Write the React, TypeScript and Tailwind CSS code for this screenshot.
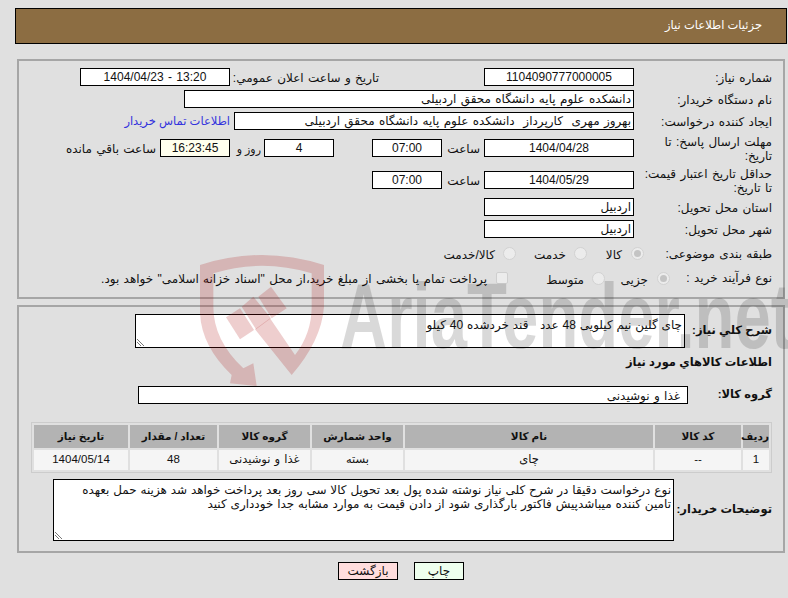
import React from "react";

const Box = ({ w, children, center, bg, ltr }: { w: string; children?: React.ReactNode; center?: boolean; bg?: string; ltr?: boolean }) => (
  <div dir={ltr ? "ltr" : undefined} className={`${w} h-[18px] shrink-0 border border-black ${bg ?? "bg-white"} leading-[16px] px-[2px] whitespace-pre overflow-hidden ${center ? "text-center" : "text-right"}`}>{children}</div>
);

const Row = ({ label, h = "h-[18px]", mt = "mt-[4px]", children }: { label: React.ReactNode; h?: string; mt?: string; children?: React.ReactNode }) => (
  <div className={`flex items-center ${h} ${mt}`}>
    <div className="w-[138px] shrink-0 leading-[14px] pt-[2px]">{label}</div>
    {children}
  </div>
);

const Radio = ({ on }: { on?: boolean }) => (
  <span className="w-[13px] h-[13px] shrink-0 rounded-full border border-[#d2d2d2] bg-[#ececec] flex items-center justify-center">
    {on && <span className="w-[7px] h-[7px] rounded-full bg-[#c4c4c4]" />}
  </span>
);

const Grip = () => (
  <svg className="absolute left-0 bottom-0 w-[9px] h-[9px]" viewBox="0 0 9 9" fill="none" stroke="#777" strokeWidth="1">
    <path d="M1 1 8 8M1 4 5 8" />
  </svg>
);

const Th = ({ children }: { children: React.ReactNode }) => (
  <th className="h-[23px] p-0 bg-[#b3b3b3] text-center font-bold text-[10.5px] whitespace-nowrap [word-spacing:0]">{children}</th>
);
const Td = ({ children }: { children: React.ReactNode }) => (
  <td className="h-[20px] p-0 bg-[#f5f5f5] text-center text-[11.5px] whitespace-nowrap">{children}</td>
);

export default function App() {
  return (
    <div dir="rtl" className='relative w-[788px] h-[598px] overflow-hidden bg-[#e0e0e0] text-[#111] text-[12px] [word-spacing:1px] font-["Liberation_Sans","DejaVu_Sans",sans-serif]'>
      <div className="pt-[8px] ps-[1px] pe-[15px]">
        <div className="h-[36px] border border-black bg-[#8c6d42] text-white text-[11.5px] [word-spacing:0] flex items-center pr-[24px]">جزئیات اطلاعات نیاز</div>
      </div>

      <div className="mt-[15px] ms-[3px] me-[17px] h-[240px] border-2 border-[#a6a6a6] pt-[7px] pr-[11px]">
        <Row label="شماره نیاز:" mt="mt-0">
          <Box w="w-[150px]" center>1104090777000005</Box>
          <div className="w-[254px] shrink-0 ps-[105px] pt-[2px] whitespace-nowrap">تاریخ و ساعت اعلان عمومي:</div>
          <Box w="w-[150px]" center ltr>1404/04/23 - 13:20</Box>
        </Row>
        <Row label="نام دستگاه خریدار:">
          <Box w="w-[450px]">دانشکده علوم پایه دانشگاه محقق اردبیلی</Box>
        </Row>
        <Row label="ایجاد کننده درخواست:">
          <Box w="w-[400px]">بهروز مهری  کارپرداز  دانشکده علوم پایه دانشگاه محقق اردبیلی</Box>
          <div className="ps-[4px] pt-[2px] text-[#3333dd] [word-spacing:0] text-[11.5px]">اطلاعات تماس خریدار</div>
        </Row>
        <Row label={<>مهلت ارسال پاسخ: تا<br />تاریخ:</>} h="h-[28px]">
          <Box w="w-[150px]" center>1404/04/28</Box>
          <div className="w-[42px] shrink-0 ps-[4px] pt-[2px]">ساعت</div>
          <Box w="w-[70px]" center>07:00</Box>
          <div className="w-[38px] shrink-0" />
          <Box w="w-[70px]" center>4</Box>
          <div className="w-[34px] shrink-0 ps-[3px] pt-[2px] [word-spacing:0] text-[11px]">روز و</div>
          <Box w="w-[70px]" center bg="bg-[#ffffee]">16:23:45</Box>
          <div className="ps-[4px] pt-[2px]">ساعت باقي مانده</div>
        </Row>
        <Row label={<>حداقل تاریخ اعتبار قیمت:<br />تا تاریخ:</>} h="h-[28px]">
          <Box w="w-[150px]" center>1404/05/29</Box>
          <div className="w-[42px] shrink-0 ps-[4px] pt-[2px]">ساعت</div>
          <Box w="w-[70px]" center>07:00</Box>
        </Row>
        <Row label="استان محل تحویل:">
          <Box w="w-[150px]">اردبیل</Box>
        </Row>
        <Row label="شهر محل تحویل:">
          <Box w="w-[150px]">اردبیل</Box>
        </Row>
        <div className="flex items-center h-[18px] mt-[6px]">
          <div className="w-[128px] shrink-0 pt-[2px]">طبقه بندی موضوعی:</div>
          <Radio on />
          <span className="w-[44px] shrink-0 ps-[9px] pt-[3px]">کالا</span>
          <Radio />
          <span className="w-[58px] shrink-0 ps-[8px] pt-[3px]">خدمت</span>
          <Radio />
          <span className="ps-[8px] pt-[3px]">کالا/خدمت</span>
        </div>
        <div className="flex items-center h-[18px] mt-[7px]">
          <div className="w-[102px] shrink-0">نوع فرآیند خرید :</div>
          <Radio on />
          <span className="w-[52px] shrink-0 ps-[9px] pt-[3px]">جزیی</span>
          <Radio />
          <span className="w-[84px] shrink-0 ps-[8px] pt-[3px]">متوسط</span>
          <span className="w-[12px] h-[12px] shrink-0 rounded-[2px] border border-[#cfcfcf] bg-[#ececec]" />
          <span className="ps-[9px] pt-[2px] whitespace-nowrap">پرداخت تمام یا بخشی از مبلغ خرید،از محل "اسناد خزانه اسلامی" خواهد بود.</span>
        </div>
      </div>

      <div className="mt-[6px] ms-[3px] me-[17px] h-[248px] border-2 border-[#a6a6a6] pt-[7px] pr-[11px]">
        <div className="flex items-center h-[34px]">
          <div className="w-[87px] shrink-0 font-bold text-[11.5px] [word-spacing:0] whitespace-nowrap">شرح کلي نیاز:</div>
          <div className="relative w-[550px] h-[34px] shrink-0 border border-black bg-white pr-[2px] leading-[20px] whitespace-pre [word-spacing:0.5px]">چای گلین نیم کیلویی 48 عدد   قند خردشده 40 کیلو<Grip /></div>
        </div>
        <div className="h-[14px] mt-[7px] leading-[14px] font-bold text-[11.5px] [word-spacing:0]">اطلاعات کالاهاي مورد نیاز</div>
        <div className="flex items-center h-[18px] mt-[17px]">
          <div className="w-[84px] shrink-0 font-bold text-[11.5px] [word-spacing:0]">گروه کالا:</div>
          <div className="w-[550px] h-[18px] shrink-0 border border-black bg-white pr-[7px] leading-[18px]">غذا و نوشیدنی</div>
        </div>
        <div className="mt-[18px]">
          <table className="table-fixed w-[741px] border border-[#cccccc] border-separate border-spacing-[2px]">
            <colgroup>
              <col className="w-[26px]" />
              <col className="w-[86px]" />
              <col className="w-[248px]" />
              <col className="w-[91px]" />
              <col className="w-[91px]" />
              <col className="w-[87px]" />
              <col className="w-[94px]" />
            </colgroup>
            <thead>
              <tr>
                <Th>ردیف</Th>
                <Th>کد کالا</Th>
                <Th>نام کالا</Th>
                <Th>واحد شمارش</Th>
                <Th>گروه کالا</Th>
                <Th>تعداد / مقدار</Th>
                <Th>تاریخ نیاز</Th>
              </tr>
            </thead>
            <tbody>
              <tr>
                <Td>1</Td>
                <Td>--</Td>
                <Td>چای</Td>
                <Td>بسته</Td>
                <Td>غذا و نوشیدنی</Td>
                <Td>48</Td>
                <Td>1404/05/14</Td>
              </tr>
            </tbody>
          </table>
        </div>
        <div className="flex items-center h-[62px] mt-[6px]">
          <div className="w-[98px] shrink-0 font-bold text-[11.5px] [word-spacing:0] whitespace-nowrap">توضیحات خریدار:</div>
          <div className="relative w-[621px] h-[62px] shrink-0 border border-black bg-white pr-[2px] pt-[3px] leading-[14px] whitespace-nowrap [word-spacing:0.5px]">
            نوع درخواست دقیقا در شرح کلی نیاز نوشته شده پول بعد تحویل کالا سی روز بعد پرداخت خواهد شد هزینه حمل بعهده
            <br />
            تامین کننده میباشدپیش فاکتور بارگذاری شود از دادن قیمت به موارد مشابه جدا خودداری کنید
            <Grip />
          </div>
        </div>
      </div>

      <div className="flex gap-[16px] mt-[9px] pr-[324px]">
        <div className="w-[50px] h-[18px] border border-black bg-[#eeffee] text-center leading-[16px]">چاپ</div>
        <div className="w-[60px] h-[18px] border border-black bg-[#ffdddd] text-center leading-[16px]">بازگشت</div>
      </div>

      <svg className="absolute left-[190px] top-[240px] w-[200px] h-[170px] pointer-events-none" viewBox="0 0 600 510" fill="#aa0a0a" fillOpacity="0.2">
        <path d="M30 75Q215 15 402 75L402 200Q395 300 305 405L195 268 240 235 315 345Q365 280 365 200L365 100Q215 55 70 100L70 200Q70 300 160 385L190 370 200 438 120 430 125 405Q35 320 30 220Z" />
        <path d="M108 232 150 205 192 270 150 298Z" />
        <path d="M155 200 190 170 243 235 198 268Z" />
        <path d="M205 170 243 140 290 205 245 235Z" />
      </svg>
      <div dir="ltr" className='absolute left-[340px] top-[266px] pointer-events-none whitespace-nowrap origin-top-left font-["Liberation_Sans"] font-bold text-[92px] leading-[100px] text-black/15 [word-spacing:0] scale-x-[0.71]'>AriaTender.net</div>
    </div>
  );
}
